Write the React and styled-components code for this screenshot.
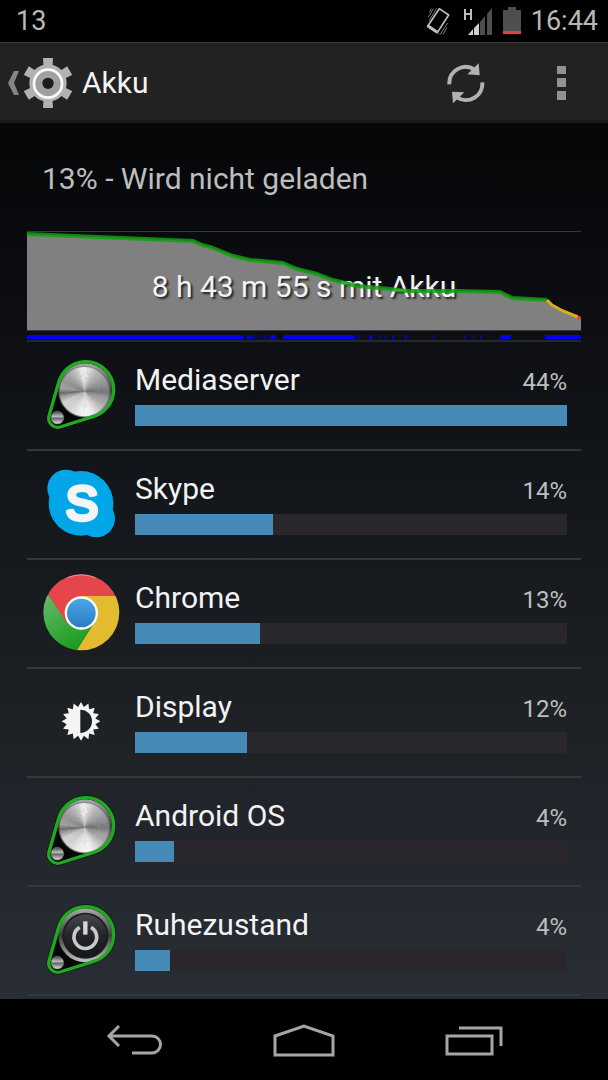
import React from 'react';
import styled, { createGlobalStyle } from 'styled-components';

const GlobalStyle = createGlobalStyle`
  * {
    box-sizing: border-box;
  }
  body {
    margin: 0;
    background: #000;
    font-family: Roboto, 'Noto Sans', sans-serif;
    color: #f3f3f3;
  }
`;

const Screen = styled.div`
  display: flex;
  flex-direction: column;
  min-height: 100vh;
`;

const StatusBar = styled.div`
  display: flex;
  align-items: center;
  height: 42px;
  padding: 0 10px 0 16px;
  background: #000;
  color: #b8b8b8;
  font-size: 27px;
  line-height: 42px;
`;

const StatusIcons = styled.div`
  display: flex;
  align-items: center;
  gap: 10px;
  margin-left: auto;
`;

const ActionBar = styled.header`
  display: flex;
  align-items: center;
  height: 81px;
  padding: 2px 24px 0 8px;
  background: #222;
  border-top: 1px solid #3b3d40;
  border-bottom: 3px solid #14191d;
`;

const UpLink = styled.a`
  display: flex;
  align-items: center;
  gap: 5px;
  color: inherit;
  text-decoration: none;
`;

const Title = styled.h1`
  margin: 0 0 0 5px;
  font-size: 30px;
  line-height: 36px;
  font-weight: 400;
`;

const Actions = styled.div`
  display: flex;
  gap: 24px;
  margin-left: auto;
`;

const IconButton = styled.button`
  display: flex;
  align-items: center;
  justify-content: center;
  width: ${(props) => props.$width}px;
  height: ${(props) => props.$height}px;
  padding: 0;
  border: 0;
  background: none;
  cursor: pointer;
`;

const Content = styled.main`
  flex: 1;
  padding: 0 27px 2px;
  background: linear-gradient(#050608, #12151a 40%, #1e2227 70%, #292d35);
`;

const Summary = styled.p`
  margin: 0;
  padding: 38px 15px 34px;
  border-bottom: 1px solid #33363a;
  color: #bebebe;
  font-size: 30px;
  line-height: 36px;
`;

const History = styled.figure`
  display: grid;
  height: 110px;
  margin: 0;
  border-bottom: 2px solid #25282b;
  > * {
    grid-area: 1 / 1;
  }
`;

const Plot = styled.svg`
  width: 100%;
  height: 108px;
`;

const Duration = styled.figcaption`
  padding-top: 37px;
  text-align: center;
  font-size: 30px;
  line-height: 36px;
  text-shadow: 2px 2px 2px #222;
`;

const List = styled.ul`
  margin: 0;
  padding: 0;
  list-style: none;
`;

const Row = styled.li`
  display: flex;
  align-items: center;
  gap: 15px;
  height: 109px;
  padding: 0 14px 3px 15px;
  border-bottom: 2px solid #34373a;
  > svg {
    flex: none;
  }
`;

const Usage = styled.div`
  flex: 1;
`;

const Labels = styled.div`
  display: flex;
  justify-content: space-between;
  align-items: baseline;
  margin-bottom: 5px;
  line-height: 36px;
`;

const Name = styled.span`
  font-size: 30px;
`;

const Percent = styled.span`
  font-size: 24px;
  color: #bebebe;
`;

const Track = styled.div`
  height: 21px;
  background: #29262c;
`;

const Bar = styled.div`
  height: 100%;
  background: #468ab8;
`;

const NavBar = styled.nav`
  display: flex;
  justify-content: center;
  height: 81px;
  background: #000;
`;

const point = (cx, cy, r, deg) => {
  const a = (deg * Math.PI) / 180;
  return `${(cx + r * Math.sin(a)).toFixed(1)} ${(cy - r * Math.cos(a)).toFixed(1)}`;
};

// grey levels around the brushed disc, clockwise from the top
const SHADES = [
  [0, 235], [12, 215], [25, 190], [50, 165], [75, 140], [90, 120], [105, 160],
  [125, 175], [150, 220], [165, 245], [190, 240], [215, 215], [240, 210],
  [255, 160], [264, 110], [275, 165], [295, 150], [320, 175], [340, 205], [350, 240], [360, 235],
];

const shadeAt = (deg) => {
  const i = SHADES.findIndex(([d]) => d > deg);
  const [d0, s0] = SHADES[i - 1];
  const [d1, s1] = SHADES[i];
  return Math.round(s0 + ((s1 - s0) * (deg - d0)) / (d1 - d0));
};

const Wedges = ({ cx, cy, r }) => {
  const wedges = [];
  for (let d = 0; d < 360; d += 4) {
    const s = shadeAt(d);
    wedges.push(
      <path
        key={d}
        d={`M${cx} ${cy}L${point(cx, cy, r, d)}L${point(cx, cy, r, d + 5)}Z`}
        fill={`rgb(${s},${s},${s})`}
      />
    );
  }
  return <g>{wedges}</g>;
};

const DROP = 'M86 100A84 84 0 1 1 189 203L90 234A27 27 0 0 1 57 201Z';

const Badge = ({ power }) => (
  <svg width="78" height="78" viewBox="36 18 234 234" aria-hidden="true">
    <defs>
      <linearGradient id="rim" x1="0" y1="0" x2="0" y2="1">
        <stop offset="0" stopColor="#aaa" />
        <stop offset="0.5" stopColor="#3c3c3c" />
        <stop offset="1" stopColor="#c4c4c4" />
      </linearGradient>
      <linearGradient id="dark" x1="0" y1="0" x2="0" y2="1">
        <stop offset="0" stopColor="#45474c" />
        <stop offset="0.5" stopColor="#232529" />
        <stop offset="1" stopColor="#141518" />
      </linearGradient>
      <linearGradient id="ball" x1="0" y1="0" x2="0" y2="1">
        <stop offset="0" stopColor="#444" />
        <stop offset="0.4" stopColor="#bbb" />
        <stop offset="0.55" stopColor="#666" />
        <stop offset="1" stopColor="#e4e4e4" />
      </linearGradient>
    </defs>
    <path d={DROP} fill="#060606" stroke="#000" strokeOpacity="0.5" strokeWidth="14" />
    <circle cx="166" cy="124" r="81" fill="url(#rim)" />
    {power ? (
      <g>
        <circle cx="166" cy="125" r="69" fill="#191a1d" />
        <circle cx="166" cy="125" r="64" fill="url(#dark)" />
        <path d="M149 100A34 34 0 1 0 183 100" fill="none" stroke="#c9c9c9" strokeWidth="11" />
        <path d="M166 82V122" stroke="#d6d6d6" strokeWidth="13" />
      </g>
    ) : (
      <g>
        <Wedges cx={164} cy={127} r={76} />
        <circle cx="163" cy="128" r="76" fill="none" stroke="#555" strokeOpacity="0.6" strokeWidth="4" />
      </g>
    )}
    <circle cx="82" cy="206" r="19" fill="url(#ball)" stroke="#777" strokeWidth="2" />
    <path d={DROP} fill="none" stroke="#1faa20" strokeWidth="10" />
  </svg>
);

const SkypeIcon = () => (
  <svg width="78" height="78" viewBox="36 15 234 234" aria-hidden="true">
    <g fill="#00a6e8">
      <circle cx="153" cy="133" r="97" />
      <circle cx="108" cy="88" r="56" />
      <circle cx="199" cy="179" r="56" />
    </g>
    <text
      x="156"
      y="184"
      textAnchor="middle"
      fontFamily="'Liberation Sans', sans-serif"
      fontSize="146"
      fill="#f5f5f5"
      stroke="#f5f5f5"
      strokeWidth="13"
      strokeLinejoin="round"
    >
      S
    </text>
  </svg>
);

const ChromeIcon = () => (
  <svg width="78" height="78" viewBox="36 27 234 234" aria-hidden="true">
    <defs>
      <linearGradient id="leaf" x1="0" y1="0" x2="0.6" y2="1">
        <stop offset="0" stopColor="#69bb6b" />
        <stop offset="1" stopColor="#189a1c" />
      </linearGradient>
      <linearGradient id="lens" x1="0" y1="0" x2="0" y2="1">
        <stop offset="0" stopColor="#4ba6e6" />
        <stop offset="1" stopColor="#2b7cc2" />
      </linearGradient>
      <clipPath id="disc">
        <circle cx="154" cy="145" r="114" />
      </clipPath>
    </defs>
    <g clipPath="url(#disc)">
      <path d="M154 96H280V270H133L197 168Z" fill="#e3bb30" />
      <path d="M30 96L56 93L110 170L197 168L133 270H30Z" fill="url(#leaf)" />
      <path d="M30 48V20H280V96H154L110 176L56 93Z" fill="#e5464b" />
    </g>
    <path d="M112 41A112 112 0 0 1 196 41" fill="none" stroke="#ccc" strokeWidth="2" />
    <circle cx="154" cy="147" r="50" fill="#fff" />
    <circle cx="154" cy="147" r="43" fill="url(#lens)" />
  </svg>
);

const DisplayIcon = () => {
  const teeth = Array.from({ length: 32 }, (_, i) => point(153, 127, i % 2 ? 44 : 58, i * 11.25));
  return (
    <svg width="78" height="78" viewBox="36 9 234 234" aria-hidden="true">
      <path d={`M${teeth.join('L')}Z`} fill="#f4f4f4" />
      <path d="M151 92A35 35 0 0 1 151 162Z" fill="#1d2126" />
    </svg>
  );
};

const GearIcon = () => (
  <svg width="48" height="52" viewBox="72 168 144 156" aria-hidden="true">
    <g fill="#b2b2b2">
      {[0, 60, 120, 180, 240, 300].map((deg) => (
        <path key={deg} d="M129 171H159L157 204H131Z" transform={`rotate(${deg} 144 246)`} />
      ))}
      <circle cx="144" cy="246" r="56" />
    </g>
    <circle cx="144" cy="248" r="42" fill="#a0a0a0" stroke="#fafafa" strokeWidth="8" />
    <circle cx="144" cy="247" r="17" fill="#1c1c1c" />
  </svg>
);

const ChevronIcon = () => (
  <svg width="11" height="24" viewBox="0 0 11 24" aria-hidden="true">
    <path d="M6 0H11L6 12L11 24H6L0 12Z" fill="#858585" />
  </svg>
);

const RefreshIcon = () => (
  <svg width="38" height="40" viewBox="119 187 114 120" aria-hidden="true">
    <g fill="none" stroke="#b2b2b2" strokeWidth="12">
      <path d="M126 251A49 49 0 0 1 202 207" />
      <path d="M225 245A49 49 0 0 1 149 290" />
    </g>
    <path d="M214 188L217 224L180 221Z" fill="#b2b2b2" />
    <path d="M134 273L171 275L137 308Z" fill="#b2b2b2" />
  </svg>
);

const OverflowIcon = () => (
  <svg width="9" height="34" viewBox="0 0 9 34" fill="#929292" aria-hidden="true">
    <path d="M0 0H9V8H0ZM0 12H9V21H0ZM0 25H9V34H0Z" />
  </svg>
);

const VibrateIcon = () => (
  <svg width="27" height="28" viewBox="56 20 81 84" fill="none" stroke="#bdbdbd" aria-hidden="true">
    <path d="M96 25L124 44L90 97L61 78Z" strokeWidth="5" strokeLinejoin="round" />
    <path d="M61 76L90 96" strokeWidth="9" />
    <path d="M65 62L88 24M62 52L78 25M66 36L72 25" strokeWidth="2" />
    <path d="M98 103L121 68M107 102L119 82M92 102L95 99" strokeWidth="2" />
  </svg>
);

const SignalIcon = () => (
  <svg width="30" height="28" viewBox="0 0 30 28" aria-hidden="true">
    <path d="M2 2V13M8 2V13M2 7H8" fill="none" stroke="#bdbdbd" strokeWidth="2" />
    <path d="M5 28L10 22V28ZM11 21L16 16V28H11Z" fill="#d0d0d0" />
    <path d="M17 15L22 9V28H17ZM24 7L29 1V28H24Z" fill="#4d4e50" />
  </svg>
);

const BatteryIcon = () => (
  <svg width="18" height="28" viewBox="0 0 18 28" aria-hidden="true">
    <path d="M5 0H13V3H18V24H0V3H5Z" fill="#4d4e50" />
    <path d="M0 24H18V27H0Z" fill="#ef3f45" />
  </svg>
);

const BackIcon = () => (
  <svg width="58" height="32" viewBox="0 0 58 32" fill="none" stroke="#a6a6a6" strokeWidth="3" aria-hidden="true">
    <path d="M4 12H47A8 8 0 0 1 47 29H27" />
    <path d="M14 2L4 12L14 22" />
  </svg>
);

const HomeIcon = () => (
  <svg width="62" height="34" viewBox="0 0 62 34" fill="none" stroke="#a6a6a6" strokeWidth="3" aria-hidden="true">
    <path d="M2 13L31 3L60 13V32H2Z" />
  </svg>
);

const RecentIcon = () => (
  <svg width="58" height="32" viewBox="0 0 58 32" fill="none" stroke="#a6a6a6" strokeWidth="3" aria-hidden="true">
    <path d="M2 12H47V30H2Z" />
    <path d="M14 4H56V22" />
  </svg>
);

const LEVEL =
  '0 2 166 9 175 13 186 16 206 24 223 28 256 31 270 37 290 42 306 48 330 54 363 57 380 59 430 59 473 60 485 66 520 68';
const LEVEL_LOW = '520 68 525 73 536 79 551 85';

// [start, end] of the periods drawn below the level
const AWAKE = [
  [0, 217], [220, 224], [225, 226], [227, 228], [234, 235], [238, 239], [242, 243],
  [244, 249], [256, 328], [331, 332], [342, 345], [352, 353], [358, 359], [365, 367],
  [378, 380], [406, 407], [437, 438], [446, 447], [453, 454], [473, 484], [518, 554],
];

const apps = [
  { name: 'Mediaserver', percent: 44, width: 100, icon: <Badge /> },
  { name: 'Skype', percent: 14, width: 32, icon: <SkypeIcon /> },
  { name: 'Chrome', percent: 13, width: 29, icon: <ChromeIcon /> },
  { name: 'Display', percent: 12, width: 26, icon: <DisplayIcon /> },
  { name: 'Android OS', percent: 4, width: 9, icon: <Badge /> },
  { name: 'Ruhezustand', percent: 4, width: 8, icon: <Badge power /> },
];

const BatteryHistory = () => (
  <History>
    <Plot viewBox="0 0 554 108" preserveAspectRatio="none" aria-hidden="true">
      <polygon points={`${LEVEL} ${LEVEL_LOW} 554 87 554 98 0 98`} fill="#808080" />
      <rect x="0" y="98" width="554" height="1" fill="#33363a" />
      {AWAKE.map(([from, to]) => (
        <rect key={from} x={from} y="103" width={to - from} height="4" fill="#0000f5" />
      ))}
    </Plot>
    <Duration>8 h 43 m 55 s mit Akku</Duration>
    <Plot viewBox="0 0 554 108" preserveAspectRatio="none" fill="none" aria-hidden="true">
      <polyline points={LEVEL} stroke="#12a012" strokeOpacity="0.85" strokeWidth="4" strokeLinejoin="round" />
      <polyline points={LEVEL_LOW} stroke="#d9ae1c" strokeWidth="3" />
      <circle cx="552" cy="86" r="2" fill="#f03c3c" />
    </Plot>
  </History>
);

export default function App() {
  return (
    <Screen>
      <GlobalStyle />
      <StatusBar>
        <span>13</span>
        <StatusIcons>
          <VibrateIcon />
          <SignalIcon />
          <BatteryIcon />
          <span>16:44</span>
        </StatusIcons>
      </StatusBar>
      <ActionBar>
        <UpLink href="#">
          <ChevronIcon />
          <GearIcon />
          <Title>Akku</Title>
        </UpLink>
        <Actions>
          <IconButton $width={96} $height={75} aria-label="Aktualisieren">
            <RefreshIcon />
          </IconButton>
          <IconButton $width={46} $height={75} aria-label="Weitere Optionen">
            <OverflowIcon />
          </IconButton>
        </Actions>
      </ActionBar>
      <Content>
        <Summary>13% - Wird nicht geladen</Summary>
        <BatteryHistory />
        <List>
          {apps.map((app) => (
            <Row key={app.name}>
              {app.icon}
              <Usage>
                <Labels>
                  <Name>{app.name}</Name>
                  <Percent>{app.percent}%</Percent>
                </Labels>
                <Track>
                  <Bar style={{ width: `${app.width}%` }} />
                </Track>
              </Usage>
            </Row>
          ))}
        </List>
      </Content>
      <NavBar>
        <IconButton $width={170} $height={81} aria-label="Zurück">
          <BackIcon />
        </IconButton>
        <IconButton $width={170} $height={81} aria-label="Startseite">
          <HomeIcon />
        </IconButton>
        <IconButton $width={170} $height={81} aria-label="Letzte Apps">
          <RecentIcon />
        </IconButton>
      </NavBar>
    </Screen>
  );
}
